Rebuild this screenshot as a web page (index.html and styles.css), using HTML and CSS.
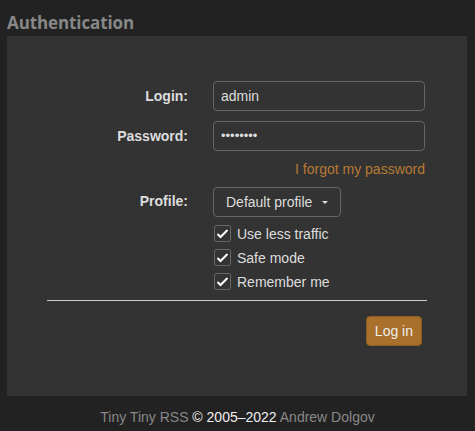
FILE: index.html
```html
<!DOCTYPE html>
<html>
<head>
<meta charset="utf-8">
<link rel="stylesheet" href="styles.css">
</head>
<body>
<h1 class="title">Authentication</h1>
<div class="panel">
  <form class="form">
    <div class="grid">
      <label class="lbl">Login:</label>
      <div class="field">admin</div>
      <label class="lbl">Password:</label>
      <div class="field pw">••••••••</div>
      <div></div>
      <a class="forgot">I forgot my password</a>
      <label class="lbl lbl-top">Profile:</label>
      <div class="select">Default profile <span class="caret"></span></div>
      <div></div>
      <div class="checks">
        <div class="check"><span class="box"><svg width="13" height="11" viewBox="0 0 13 11"><path d="M1.5 6 L4.5 9 L11.5 2" fill="none" stroke="#fff" stroke-width="2"/></svg></span>Use less traffic</div>
        <div class="check"><span class="box"><svg width="13" height="11" viewBox="0 0 13 11"><path d="M1.5 6 L4.5 9 L11.5 2" fill="none" stroke="#fff" stroke-width="2"/></svg></span>Safe mode</div>
        <div class="check"><span class="box"><svg width="13" height="11" viewBox="0 0 13 11"><path d="M1.5 6 L4.5 9 L11.5 2" fill="none" stroke="#fff" stroke-width="2"/></svg></span>Remember me</div>
      </div>
    </div>
    <hr class="sep">
    <div class="actions"><button class="btn" type="button">Log in</button></div>
  </form>
</div>
<div class="footer"><span class="dim">Tiny Tiny RSS</span> © 2005–2022 <span class="dim">Andrew Dolgov</span></div>
</body>
</html>
```
FILE: styles.css
```css
html, body {
  margin: 0;
  padding: 0;
  background: #222;
  font-family: "Liberation Sans", Arial, sans-serif;
  font-size: 14px;
  color: #ddd;
}
.title {
  margin: 0;
  padding: 12px 7px 0 7px;
  height: 24px;
  font-family: "Open Sans", sans-serif;
  font-weight: 700;
  font-size: 17px;
  letter-spacing: -0.1px;
  line-height: 22px;
  color: #888;
}
.panel {
  margin: 0 8px 0 7px;
  background: #333;
  height: 360px;
  box-sizing: border-box;
  padding: 45px 40px 0 40px;
}
.grid {
  display: grid;
  grid-template-columns: 141px 212px;
  column-gap: 25px;
  row-gap: 10px;
  align-items: center;
}
.lbl {
  text-align: right;
  font-weight: 700;
  color: #ddd;
}
.lbl-top { align-self: start; padding-top: 6px; }
.field {
  height: 30px;
  box-sizing: border-box;
  border: 1px solid #666;
  border-radius: 4px;
  padding: 0 7px;
  line-height: 28px;
  color: #ddd;
}
.field.pw { font-size: 13px; }
.forgot {
  text-align: right;
  color: #b87a34;
  line-height: 16px;
}
.select {
  justify-self: start;
  height: 30px;
  box-sizing: border-box;
  border: 1px solid #666;
  border-radius: 4px;
  padding: 0 12px 0 12px;
  line-height: 28px;
  color: #ddd;
  display: flex;
  align-items: center;
  gap: 10px;
}
.caret {
  width: 0; height: 0;
  border-left: 3px solid transparent;
  border-right: 3px solid transparent;
  border-top: 3px solid #ddd;
}
.checks {
  margin-top: -2px;
  display: flex;
  flex-direction: column;
  gap: 7px;
}
.check {
  display: flex;
  align-items: center;
  gap: 6px;
  height: 17px;
  margin-left: 1px;
}
.box {
  width: 17px; height: 17px;
  box-sizing: border-box;
  border: 1px solid #666;
  border-radius: 2px;
  display: flex;
  align-items: center;
  justify-content: center;
}
.sep {
  margin: 10px 0 0 0;
  border: 0;
  border-top: 1px solid #ccc;
  height: 0;
}
.actions {
  display: flex;
  justify-content: flex-end;
  padding: 15px 5px 0 0;
}
.btn {
  font-family: "Liberation Sans", Arial, sans-serif;
  font-size: 14px;
  color: #eee;
  background: #a8702a;
  border: 1px solid #8c5c20;
  border-radius: 4px;
  height: 30px;
  padding: 0 8px;
}
.footer {
  text-align: center;
  padding-top: 13px;
  line-height: 17px;
  color: #eee;
}
.dim { color: #888; }
```
